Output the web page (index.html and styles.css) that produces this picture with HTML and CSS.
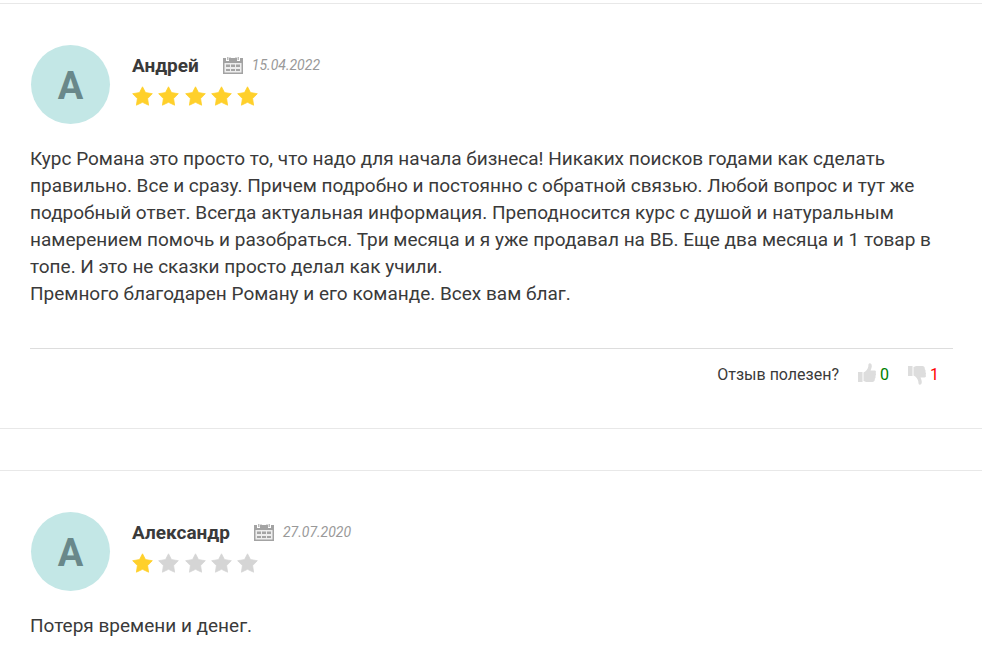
FILE: index.html
```html
<!DOCTYPE html>
<html lang="ru">
<head>
    <meta charset="UTF-8">
    <meta name="viewport" content="width=device-width, initial-scale=1.0">
    <title>Отзывы</title>
    <link rel="stylesheet" href="styles.css">
</head>
<body>
    <svg class="sprite" aria-hidden="true">
        <symbol id="star" viewBox="0 0 21 20">
            <path d="M10.5 0.8 L13.5 6.6 L20.3 7.7 L15.6 12.6 L16.6 19.2 L10.5 16.3 L4.4 19.2 L5.4 12.6 L0.7 7.7 L7.5 6.6 Z" stroke-width="0.8" stroke-linejoin="round"/>
        </symbol>
        <symbol id="calendar" viewBox="0 0 20 17">
            <path fill="#a3a3a3" d="M0 1h3v3h3V1h8v3h3V1h3v16H0z"/>
            <path fill="#bbb" d="M4 0h1.500v3H4zM14.500 0H16v3h-1.500zM6.500 0h1v1h-1zM12.500 0h1v1h-1z"/>
            <path fill="#eee" d="M1.500 6h17v9.500h-17z"/>
            <path fill="#a5a5a5" d="M3 7.500h4v2.500H3zM8 7.500h4v2.500H8zM13 7.500h4v2.500h-4zM3 12h4v2H3zM8 12h4v2H8zM13 12h4v2h-4z"/>
        </symbol>
        <symbol id="thumb" viewBox="0 0 18 20">
            <path d="M0 9h4.500v10H0z"/>
            <path d="M5.500 9.500C8 8.500 10 6 10.300 3.500C10.400 1.500 10.600 0.300 11.700 0.300C13.500 0.300 14 2.300 13.700 4C13.500 5.400 12.800 6.500 12.500 7.500H16.500C18 7.500 18.300 9 17.600 10C18.300 11 18 12.200 17.400 12.900C17.900 14 17.500 15.200 16.800 15.800C17 17.800 16 19 14.300 19H9C7.500 19 6.500 18.300 5.500 18Z"/>
        </symbol>
    </svg>

    <main class="reviews">
        <article class="review">
            <header class="review-head">
                <div class="avatar">А</div>
                <div class="review-info">
                    <div class="review-meta">
                        <span class="name">Андрей</span>
                        <svg class="calendar" aria-hidden="true"><use href="#calendar"/></svg>
                        <time class="date" datetime="2022-04-15">15.04.2022</time>
                    </div>
                    <div class="stars" role="img" aria-label="Оценка: 5 из 5">
                        <svg class="star on"><use href="#star"/></svg>
                        <svg class="star on"><use href="#star"/></svg>
                        <svg class="star on"><use href="#star"/></svg>
                        <svg class="star on"><use href="#star"/></svg>
                        <svg class="star on"><use href="#star"/></svg>
                    </div>
                </div>
            </header>
            <p class="review-text">Курс Романа это просто то, что надо для начала бизнеса! Никаких поисков годами как сделать правильно. Все и сразу. Причем подробно и постоянно с обратной связью. Любой вопрос и тут же подробный ответ. Всегда актуальная информация. Преподносится курс с душой и натуральным намерением помочь и разобраться. Три месяца и я уже продавал на ВБ. Еще два месяца и 1 товар в топе. И это не сказки просто делал как учили.<br>Премного благодарен Роману и его команде. Всех вам благ.</p>
            <footer class="review-foot">
                <span class="question">Отзыв полезен?</span>
                <button type="button" class="vote yes" aria-label="Полезен: 0">
                    <svg class="thumb"><use href="#thumb"/></svg>
                    <span>0</span>
                </button>
                <button type="button" class="vote no" aria-label="Не полезен: 1">
                    <svg class="thumb down"><use href="#thumb"/></svg>
                    <span>1</span>
                </button>
            </footer>
        </article>

        <article class="review">
            <header class="review-head">
                <div class="avatar">А</div>
                <div class="review-info">
                    <div class="review-meta">
                        <span class="name">Александр</span>
                        <svg class="calendar" aria-hidden="true"><use href="#calendar"/></svg>
                        <time class="date" datetime="2020-07-27">27.07.2020</time>
                    </div>
                    <div class="stars" role="img" aria-label="Оценка: 1 из 5">
                        <svg class="star on"><use href="#star"/></svg>
                        <svg class="star"><use href="#star"/></svg>
                        <svg class="star"><use href="#star"/></svg>
                        <svg class="star"><use href="#star"/></svg>
                        <svg class="star"><use href="#star"/></svg>
                    </div>
                </div>
            </header>
            <p class="review-text">Потеря времени и денег.</p>
        </article>
    </main>
</body>
</html>
```
FILE: styles.css
```css
body {
    margin: 0;
    font-family: Roboto, sans-serif;
    font-size: 19px;
    line-height: 27px;
    color: #3a3a3a;
    background: #fff;
}
.sprite {
    display: none;
}
.reviews {
    display: flex;
    flex-direction: column;
    gap: 41px;
    padding-top: 3px;
}
.review {
    padding: 41px 29px 40px 30px;
    border-top: 1px solid #e8e8e8;
    border-bottom: 1px solid #e8e8e8;
}
.review-head {
    display: flex;
    gap: 22px;
    padding: 0 1px;
}
.avatar {
    flex: none;
    width: 79px;
    height: 79px;
    border-radius: 50%;
    background: #c3e7e6;
    color: #69888a;
    font-size: 38px;
    font-weight: bold;
    line-height: 82px;
    text-align: center;
}
.review-meta {
    display: flex;
    align-items: center;
    padding-top: 7px;
}
.name {
    font-weight: bold;
}
.calendar {
    width: 20px;
    height: 17px;
    margin: 0 9px 0 24px;
}
.date {
    font-size: 14px;
    font-style: italic;
    color: #999;
}
.stars {
    display: flex;
    justify-content: space-between;
    width: 126px;
    padding-top: 7px;
}
.star {
    width: 21px;
    height: 20px;
    fill: #d5d5d5;
    stroke: #d5d5d5;
}
.star.on {
    fill: #ffd02b;
    stroke: #ffd02b;
}
.review-text {
    margin: 21px 0 41px;
}
.review-foot {
    display: flex;
    justify-content: flex-end;
    align-items: center;
    padding: 12px 14px 0 0;
    border-top: 1px solid #ddd;
    font-size: 16px;
}
.vote {
    display: flex;
    align-items: center;
    gap: 4px;
    margin-left: 19px;
    padding: 0;
    border: none;
    background: none;
    font: inherit;
    cursor: pointer;
}
.yes {
    color: green;
}
.no {
    color: red;
}
.thumb {
    width: 18px;
    height: 20px;
    padding-bottom: 3px;
    fill: #ddd;
}
.down {
    padding-bottom: 0;
    transform: scaleY(-1);
}
```
